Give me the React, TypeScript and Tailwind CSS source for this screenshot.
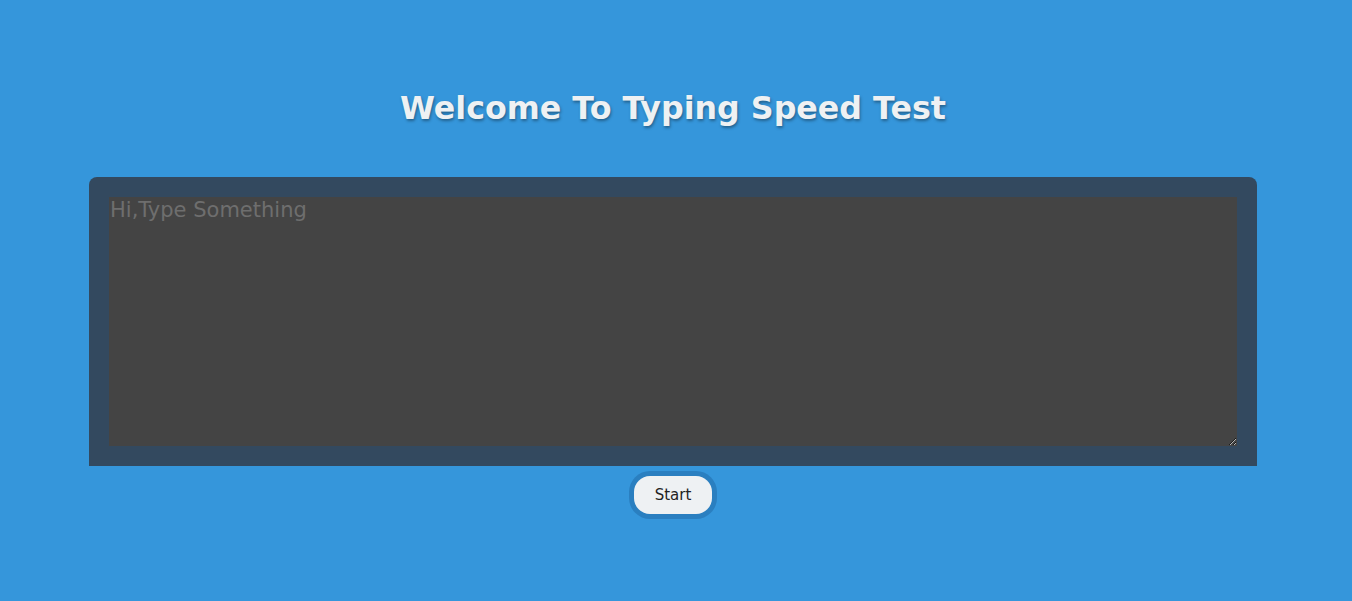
import React from "react";

const App = () => {
    return (
        <div className="min-h-[601px] w-full bg-[#3596db] font-['DejaVu_Sans',sans-serif]">
            <div className="w-[1346px] flex flex-col items-center pt-[86px]">
                <h1 className="text-[31.7px] font-bold text-[#eef1f3] [text-shadow:1px_2px_3px_rgba(0,0,0,0.35)] leading-[44px]">
                    Welcome To Typing Speed Test
                </h1>
                <div className="mt-[47px] w-[1168px] bg-[#33495f] rounded-t-[8px] p-[20px]">
                    <textarea
                        className="block w-full h-[249px] bg-[#444444] text-[21px] text-[#ddd] placeholder:text-[#6e6e6e] outline-none px-[1px] py-0 leading-[26px] font-['DejaVu_Sans',sans-serif]"
                        placeholder="Hi,Type Something"
                    />
                </div>
                <button className="mt-[10px] h-[38px] px-[21px] rounded-[16px] bg-[#eef1f3] text-[15px] text-[#222] ring-[5px] ring-[#2a7fc0]">
                    Start
                </button>
            </div>
        </div>
    );
};

export default App;
